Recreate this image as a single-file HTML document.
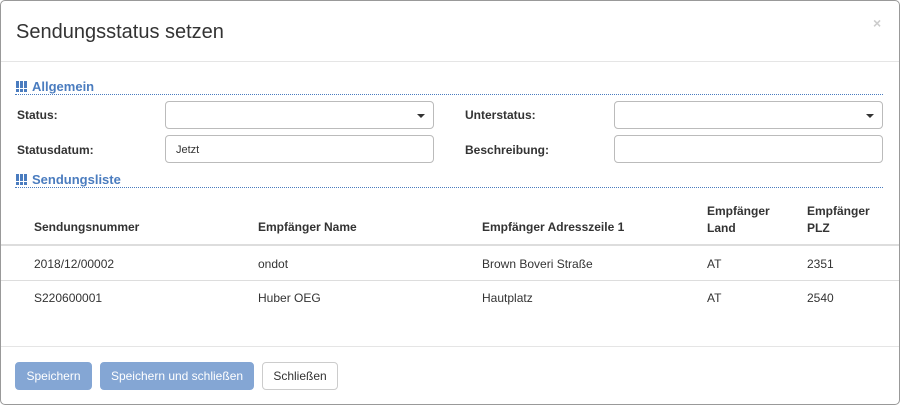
<!DOCTYPE html>
<html><head><meta charset="utf-8"><style>
*{box-sizing:border-box;margin:0;padding:0}
body{width:901px;height:406px;background:#fff;font-family:"Liberation Sans",Arial,sans-serif;font-size:12px;color:#333;position:relative;overflow:hidden}
.modal{position:absolute;left:0;top:0;width:900px;height:405px;border:1px solid #999;border-radius:5px;}
.a{position:absolute;white-space:nowrap}
.hd{color:#4a7cbf;font-weight:bold;font-size:13px}
.dot{position:absolute;left:15px;width:868px;border-top:1px dotted #4a7cbf}
.in{position:absolute;border:1px solid #bbb;border-radius:4px;background:#fff}
.lbl{font-weight:bold}
.ic{display:inline-block;vertical-align:-1px;margin-right:4px}
.ic i{display:inline-block;width:3px;height:11px;background:linear-gradient(#4a7cbf 0,#4a7cbf 7px,transparent 7px,transparent 8px,#4a7cbf 8px);margin-right:1px}
.car{position:absolute;right:8px;top:12px;border-left:4px solid transparent;border-right:4px solid transparent;border-top:4px solid #333}
.btn{position:absolute;top:362px;height:28px;border-radius:4px;font-size:12px;line-height:26px;text-align:center}
.bp{background:#84a6d4;color:#fff;border:1px solid #84a6d4}
</style></head><body>
<div class="modal"></div>
<div class="a" style="left:16px;top:21px;font-size:20px;color:#333">Sendungsstatus setzen</div>
<div class="a" style="left:873px;top:15px;font-size:14px;color:#ccc;font-weight:bold">×</div>
<div class="a" style="left:1px;top:61px;width:898px;border-top:1px solid #e5e5e5"></div>

<div class="a hd" style="left:16px;top:79px"><span class="ic"><i></i><i></i><i></i></span>Allgemein</div>
<div class="dot" style="top:94px"></div>
<div class="a lbl" style="left:17px;top:108px">Status:</div>
<div class="in" style="left:165px;top:101px;width:269px;height:28px"><div class="car"></div></div>
<div class="a lbl" style="left:465px;top:108px">Unterstatus:</div>
<div class="in" style="left:614px;top:101px;width:269px;height:28px"><div class="car"></div></div>
<div class="a lbl" style="left:17px;top:143px">Statusdatum:</div>
<div class="in" style="left:165px;top:135px;width:269px;height:28px"><span class="a" style="left:10px;top:8px;font-size:11px">Jetzt</span></div>
<div class="a lbl" style="left:465px;top:143px">Beschreibung:</div>
<div class="in" style="left:614px;top:135px;width:269px;height:28px"></div>

<div class="a hd" style="left:16px;top:172px"><span class="ic"><i></i><i></i><i></i></span>Sendungsliste</div>
<div class="dot" style="top:187px"></div>

<div class="a lbl" style="left:34px;top:220px">Sendungsnummer</div>
<div class="a lbl" style="left:258px;top:220px">Empfänger Name</div>
<div class="a lbl" style="left:482px;top:220px">Empfänger Adresszeile 1</div>
<div class="a lbl" style="left:707px;top:203px;line-height:17px">Empfänger<br>Land</div>
<div class="a lbl" style="left:807px;top:203px;line-height:17px">Empfänger<br>PLZ</div>
<div class="a" style="left:1px;top:244px;width:898px;border-top:2px solid #ddd"></div>
<div class="a" style="left:34px;top:257px">2018/12/00002</div>
<div class="a" style="left:258px;top:257px">ondot</div>
<div class="a" style="left:482px;top:257px">Brown Boveri Straße</div>
<div class="a" style="left:707px;top:257px">AT</div>
<div class="a" style="left:807px;top:257px">2351</div>
<div class="a" style="left:1px;top:280px;width:898px;border-top:1px solid #ddd"></div>
<div class="a" style="left:34px;top:291px">S220600001</div>
<div class="a" style="left:258px;top:291px">Huber OEG</div>
<div class="a" style="left:482px;top:291px">Hautplatz</div>
<div class="a" style="left:707px;top:291px">AT</div>
<div class="a" style="left:807px;top:291px">2540</div>

<div class="a" style="left:1px;top:346px;width:898px;border-top:1px solid #e5e5e5"></div>
<div class="btn bp" style="left:15px;width:77px">Speichern</div>
<div class="btn bp" style="left:100px;width:154px">Speichern und schließen</div>
<div class="btn" style="left:262px;width:76px;border:1px solid #ccc;color:#333;background:#fff">Schließen</div>
</body></html>
